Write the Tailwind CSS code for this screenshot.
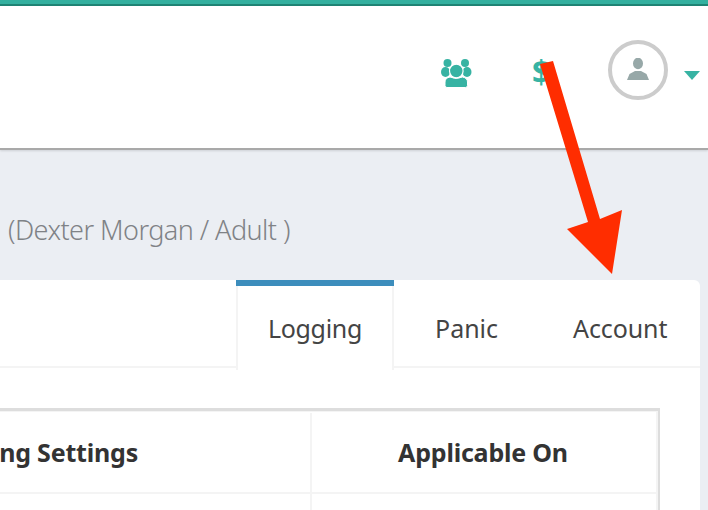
<!DOCTYPE html>
<html lang="en">
<head>
    <meta charset="UTF-8">
    <title>Settings</title>
    <script src="https://cdn.jsdelivr.net/npm/@tailwindcss/browser@4"></script>
</head>
<body class="relative h-[510px] w-[708px] overflow-hidden bg-[#ebeef3] font-['Noto_Sans',sans-serif]">
    <!-- Top bar -->
    <div class="h-[6px] bg-[#33b09f] border-b-2 border-[#1f8474]"></div>

    <!-- Header -->
    <header class="flex h-[144px] items-start justify-end bg-white border-b-2 border-[#a9a9a9] shadow-[0_1px_2px_rgba(0,0,0,0.12)]">
        <div class="flex items-center mt-[34px] pr-[8px]">
            <svg class="w-[32px] h-[30px] mr-[57px] mt-[5px]" viewBox="0 0 32 30" fill="#37b3a3">
                <circle cx="7.500" cy="5" r="4"/>
                <circle cx="25" cy="5" r="4"/>
                <ellipse cx="5.500" cy="14" rx="4.500" ry="5"/>
                <ellipse cx="27" cy="14" rx="4.500" ry="5"/>
                <circle cx="16.300" cy="13" r="6.800" stroke="#ffffff" stroke-width="1.200"/>
                <path d="M5 24q0-4 5-5q6 3 12.500 0q5 1 5 5v3.500q0 2-2 2h-18.500q-2 0-2-2z" stroke="#ffffff" stroke-width="1"/>
            </svg>
            <span class="w-[18px] mr-[58px] ml-[3px] mt-[3px] text-[32px] leading-[30px] font-bold text-[#37b3a3]">$</span>
            <div class="flex h-[60px] w-[60px] items-center justify-center rounded-full border-[4px] border-[#cccccc]">
                <svg class="w-[22px] h-[22px] mb-[3px]" viewBox="0 0 22 22" fill="#97a8a8">
                    <ellipse cx="11" cy="5.500" rx="5" ry="5.800"/>
                    <path d="M0 22l2.500-6 5.500-3h6l5.500 3 2.500 6z"/>
                </svg>
            </div>
            <div class="ml-[16px] mt-[10px] h-0 w-0 border-x-[8px] border-t-[9px] border-x-transparent border-t-[#37b3a3]"></div>
        </div>
    </header>

    <!-- Page title -->
    <p class="h-[130px] pl-[8px] pt-[62px] text-[27px] leading-[36px] font-light tracking-[-0.55px] text-[#7f8286] whitespace-nowrap">(Dexter Morgan / Adult )</p>

    <!-- Card -->
    <section class="w-[700px] h-[230px] bg-white rounded-tr-[6px]">
        <div class="flex h-[88px] justify-end text-[25px] tracking-[-0.3px] text-[#444444]">
            <div class="flex-1 border-b-2 border-[#f4f4f4]"></div>
            <div class="w-[158px] h-[90px] border-t-[6px] border-[#3c8dbc] bg-white">
                <div class="flex h-full items-center justify-center border-x-2 border-[#f4f4f4] pt-[2px]">Logging</div>
            </div>
            <div class="flex w-[306px] border-b-2 border-[#f4f4f4] pt-[29px] leading-[38px] tracking-[0px]">
                <span class="ml-[41px]">Panic</span>
                <span class="ml-[75px] tracking-[-0.1px]">Account</span>
            </div>
        </div>

        <!-- Table -->
        <div class="mt-[40px] w-[660px] h-[102px] border-t-[3px] border-r-[2px] border-[#dddddd]">
            <div class="flex h-full flex-col border-t border-r-2 border-[#f4f4f4]">
                <div class="flex h-[82px] border-b-2 border-[#f4f4f4] pt-[1px] text-[25px] tracking-[-0.2px] font-bold text-[#333333]">
                    <div class="flex w-[312px] items-center justify-end border-r-2 border-[#f4f4f4] pr-[172px] whitespace-nowrap">ng Settings</div>
                    <div class="flex flex-1 items-center justify-center pr-[2px]">Applicable On</div>
                </div>
                <div class="flex flex-1">
                    <div class="w-[312px] border-r-2 border-[#f4f4f4]"></div>
                </div>
            </div>
        </div>
    </section>

    <!-- Annotation arrow -->
    <svg class="absolute left-0 top-0 w-[708px] h-[510px]" viewBox="0 0 708 510">
        <path d="M540 64l13-3 47 158 22-9-10 64-45-45 21-7z" fill="#ff2d00"/>
    </svg>
</body>
</html>
